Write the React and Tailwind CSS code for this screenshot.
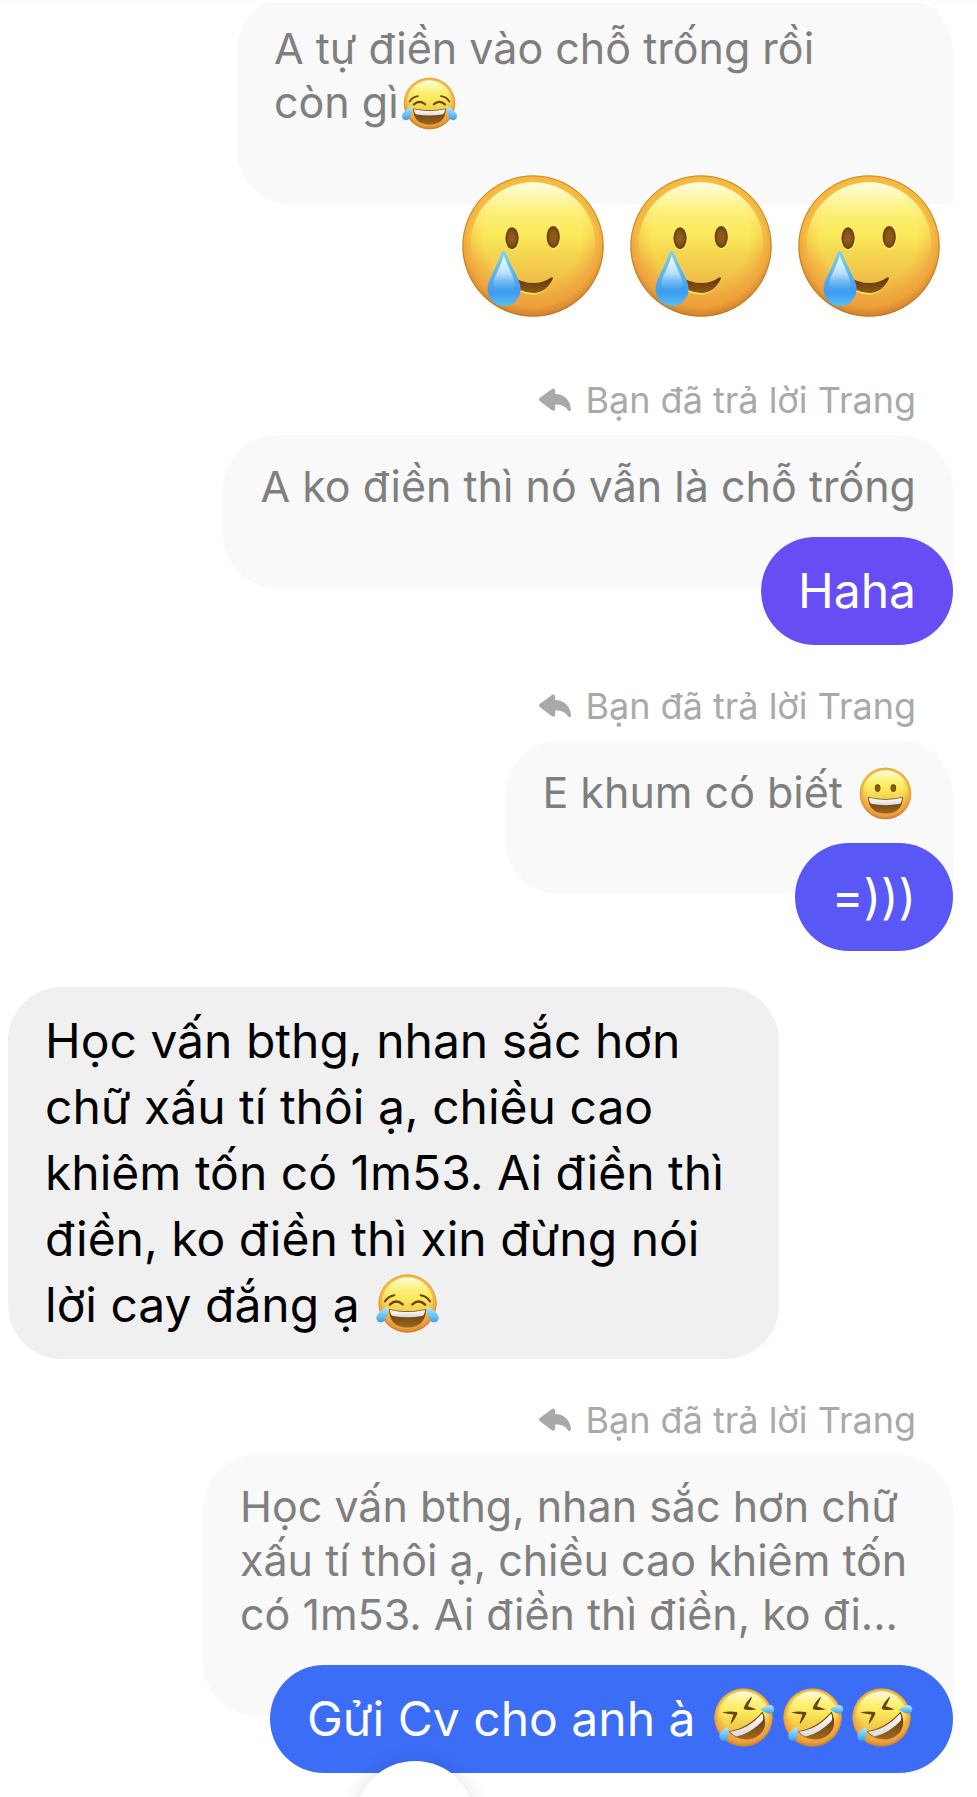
import clsx from 'clsx';

export default function App() {
  return (
    <div className="relative overflow-hidden bg-white pr-6 pb-6 pl-2 font-['Inter','Noto_Sans',sans-serif]">
      <EmojiDefs />
      <div className="absolute inset-x-0 top-0 z-10 h-[3px] bg-[#fdfdfd]" />

      <main className="-mt-[3px] flex flex-col">
        <section className="flex flex-col items-end">
          <Quote className="w-[716px]">
            A tự điền vào chỗ trống rồi
            <br />
            còn gì
            <Emoji name="joy" size="sm" />
          </Quote>
          <div className="-mt-[42px] flex">
            <Emoji name="tear" size="lg" />
            <Emoji name="tear" size="lg" />
            <Emoji name="tear" size="lg" />
          </div>
        </section>

        <section className="mt-[49px] flex flex-col items-end">
          <ReplyLabel />
          <Quote>A ko điền thì nó vẫn là chỗ trống</Quote>
          <Sent className="bg-[#674df4]">Haha</Sent>
        </section>

        <section className="mt-10 flex flex-col items-end">
          <ReplyLabel />
          <Quote>
            E khum có biết <Emoji name="grin" size="sm" />
          </Quote>
          <Sent className="bg-[#5957f5]">=)))</Sent>
        </section>

        <section className="mt-9 flex">
          <p className="w-[771px] rounded-[54px] bg-[#f0f0f0] px-[37px] py-[21px] text-[48px] leading-[66px] text-black">
            Học vấn bthg, nhan sắc hơn
            <br />
            chữ xấu tí thôi ạ, chiều cao
            <br />
            khiêm tốn có 1m53. Ai điền thì
            <br />
            điền, ko điền thì xin đừng nói
            <br />
            lời cay đắng ạ <Emoji name="joy" size="md" />
          </p>
        </section>

        <section className="mt-10 flex flex-col items-end">
          <ReplyLabel />
          <Quote className="w-[750px]">
            Học vấn bthg, nhan sắc hơn chữ
            <br />
            xấu tí thôi ạ, chiều cao khiêm tốn
            <br />
            có 1m53. Ai điền thì điền, ko đi...
          </Quote>
          <Sent className="bg-[#3b6df6]">
            Gửi Cv cho anh à <Emoji name="rofl" size="md" />
            <Emoji name="rofl" size="md" />
            <Emoji name="rofl" size="md" />
          </Sent>
        </section>
      </main>

      {/* scroll-to-bottom button, mostly below the fold */}
      <button
        type="button"
        aria-label="Cuộn xuống"
        className="absolute -bottom-[84px] left-[355px] size-[120px] rounded-full bg-white shadow-[0_0_20px_rgba(0,0,0,0.12)]"
      />
    </div>
  );
}

function ReplyLabel() {
  return (
    <div className="mb-[14px] flex items-center gap-[14px] pr-[37px] text-[36px] leading-[42px] text-[#a9a9a9]">
      <svg viewBox="0 0 32 24" className="h-6 w-8" fill="currentColor" aria-hidden="true">
        <path d="M12.6 1.2C14.2-.2 16.2.4 16.2 2.4V6C24.6 6 31.2 11.6 32 21.2C32.1 23.3 30 23.6 29 22.4C26 18.2 22.2 16.6 16.2 16.6V20.6C16.2 22.8 14.2 23.4 12.6 22L1 13.2C-.3 12.2-.3 10.8 1 9.8Z" />
      </svg>
      <span>Bạn đã trả lời Trang</span>
    </div>
  );
}

function Quote({ className, children }) {
  return (
    <blockquote
      className={clsx(
        'rounded-[54px] rounded-br-none bg-[#f9f9f9] px-[37px] pt-6 pb-[75px] text-[43px] leading-[54px] whitespace-nowrap text-[#7f7f7f]',
        className
      )}
    >
      {children}
    </blockquote>
  );
}

function Sent({ className, children }) {
  return (
    <p
      className={clsx(
        'relative -mt-[51px] rounded-[54px] px-[37px] py-[21px] text-[48px] leading-[66px] whitespace-nowrap text-white',
        className
      )}
    >
      {children}
    </p>
  );
}

const sizes = {
  sm: 'inline align-baseline -my-4 size-[61px]',
  md: 'inline align-baseline -my-4 size-[69px]',
  lg: 'relative size-[168px]',
};

const faces = { joy: Joy, grin: Grin, rofl: Rofl, tear: Tear };

const labels = {
  joy: 'cười ra nước mắt',
  grin: 'cười toe toét',
  rofl: 'cười lăn lộn',
  tear: 'cười rơi lệ',
};

function Emoji({ name, size }) {
  const Face = faces[name];
  return (
    <svg viewBox="0 0 69 69" role="img" aria-label={labels[name]} className={sizes[size]}>
      <circle cx="34.5" cy="34.5" r="29" fill="url(#skin)" />
      <circle cx="34.5" cy="34.5" r="29" fill="url(#rim)" />
      <ellipse cx="34.5" cy="33.5" rx="25.5" ry="25.2" fill="url(#gloss)" />
      <circle cx="34.5" cy="34.5" r="28.8" fill="none" stroke="#a86a22" strokeOpacity=".6" strokeWidth=".4" />
      <Face />
    </svg>
  );
}

function Joy() {
  return (
    <g>
      <g fill="none" stroke="#6b4012" strokeWidth="2.4" strokeLinecap="round">
        <path d="M12 32.4Q15.4 27 21.4 26.2M57 32.4Q53.6 27 47.6 26.2" strokeWidth="2" />
        <path d="M16.8 35.6Q23.2 29.6 29.6 35.4M39.4 35.4Q45.8 29.6 52.2 35.6" />
      </g>
      <path d="M16 40.2Q34.5 44.2 53 40.2Q52.6 58.4 34.5 58.4Q16.4 58.4 16 40.2Z" fill="url(#mouth)" />
      <path d="M17 41Q34.5 45 52 41Q51.8 46.6 48.8 47Q34.5 49.4 20.2 47Q17.2 46.6 17 41Z" fill="url(#teeth)" />
      <path d="M14.8 37.6C10 39.6 2.6 44.8 3.4 49.8C4.2 54.4 10.6 54.6 12.8 50C14.6 46.2 15 41.6 14.8 37.6Z" fill="url(#drop)" />
      <path d="M54.2 37.6C59 39.6 66.4 44.8 65.6 49.8C64.8 54.4 58.4 54.6 56.2 50C54.4 46.2 54 41.6 54.2 37.6Z" fill="url(#drop)" />
    </g>
  );
}

function Grin() {
  return (
    <g>
      <ellipse cx="25.6" cy="28.4" rx="3.2" ry="4.3" fill="url(#eye)" />
      <ellipse cx="43.4" cy="28.4" rx="3.2" ry="4.3" fill="url(#eye)" />
      <path d="M14.8 38.4Q34.5 43 54.2 38.4Q53.6 57.2 34.5 57.2Q15.4 57.2 14.8 38.4Z" fill="url(#mouth)" />
      <path d="M15.8 39.2Q34.5 43.8 53.2 39.2Q53 46 49.6 46.4Q34.5 49 19.4 46.4Q16 46 15.8 39.2Z" fill="url(#teeth)" />
    </g>
  );
}

function Rofl() {
  return (
    <g>
      <g fill="#6b4012">
        <path d="M13 29.4Q20.4 27.6 27.6 29Q28.8 29.6 28.2 31Q25.8 36.8 22.2 40.8Q21.6 40.4 21.8 39.4Q23.2 35 24.6 31.6Q18.8 30.8 13 29.4Z" />
        <path d="M42.6 13.6Q43 14 42.6 15.2Q40.6 20 38.8 23.2Q43.4 24.4 47.8 26.6Q41.6 27.4 35.8 26.4Q34.4 26 34.8 24.6Q37 19 42.6 13.6Z" />
      </g>
      <path d="M19.4 48.4Q39 45.4 53.6 28.6Q60 43.6 50.4 51.8Q41.2 59.4 28.4 54.8Q22.6 52.4 19.4 48.4Z" fill="url(#mouth)" />
      <path d="M20.8 48.8Q39.6 46.4 53.2 30.2Q55 35.4 53.4 38Q42.4 49.8 28 53.4Q24 52.6 20.8 48.8Z" fill="url(#teeth)" />
      <path d="M19.2 44C14.6 45.6 10 49.8 10.4 53.4C10.8 58.6 17.2 59.4 19 54.8C20 51.4 19.8 47.4 19.2 44Z" fill="url(#drop)" />
      <path d="M52 26.4C55.2 23.6 60 21.2 63 22.6C66 24.4 66 28.8 62.8 30.2C59.6 31.4 55.4 29 52 26.4Z" fill="url(#drop)" />
    </g>
  );
}

function Tear() {
  return (
    <g>
      <ellipse cx="26" cy="31.6" rx="2.9" ry="4.7" fill="#fff38a" opacity=".7" />
      <ellipse cx="42.9" cy="31.1" rx="2.9" ry="4.7" fill="#fff38a" opacity=".7" />
      <ellipse cx="25.9" cy="31.3" rx="2.7" ry="4.5" fill="url(#eye)" />
      <ellipse cx="42.8" cy="30.8" rx="2.7" ry="4.5" fill="url(#eye)" />
      <path d="M25 48Q34 54.4 42.8 48Q39.6 54.6 34.6 54.5Q28.6 54.4 25 50Z" fill="#ffdf58" />
      <path d="M25 46.6Q34.6 52.4 41.8 47.5Q42.9 47 42.6 48.2Q39.8 53.9 34.6 53.8Q28.6 53.6 25 49Z" fill="url(#lip)" />
      <path d="M22.5 36.6C23.2 36.6 23.7 38 24.4 39.8C26.4 44.6 29.4 48.4 29.4 52.2C29.4 56.2 26.4 59.2 22.6 59.2C18.8 59.2 15.8 56.2 15.8 52.2C15.8 48.4 18.8 44.6 20.6 39.8C21.3 38 21.8 36.6 22.5 36.6Z" fill="url(#bigdrop)" />
      <path d="M22.5 38.4C24.8 44.6 27.2 47.8 27 50.6C26.6 53.4 18.6 53.4 18.2 50.6C18 47.8 20.6 44.6 22.5 38.4Z" fill="url(#shine)" />
    </g>
  );
}

// gradients shared by every emoji on the page
function EmojiDefs() {
  return (
    <svg className="absolute size-0" aria-hidden="true">
      <defs>
        <linearGradient id="skin" x1="0" y1="0" x2="0" y2="1">
          <stop offset="0" stopColor="#f6c93f" />
          <stop offset=".4" stopColor="#f8e455" />
          <stop offset=".65" stopColor="#f3cb4d" />
          <stop offset="1" stopColor="#eb9c36" />
        </linearGradient>
        <radialGradient id="rim" cx=".5" cy=".44" r=".57">
          <stop offset=".6" stopColor="#f0a23c" stopOpacity="0" />
          <stop offset=".85" stopColor="#ef9f3b" stopOpacity=".8" />
          <stop offset="1" stopColor="#c97a28" />
        </radialGradient>
        <linearGradient id="gloss" x1="0" y1="0" x2="0" y2="1">
          <stop offset="0" stopColor="#fffde4" />
          <stop offset=".22" stopColor="#fff98f" stopOpacity=".8" />
          <stop offset=".45" stopColor="#fdf060" stopOpacity=".4" />
          <stop offset=".65" stopColor="#f7d850" stopOpacity="0" />
        </linearGradient>
        <radialGradient id="eye">
          <stop offset="0" stopColor="#94601c" />
          <stop offset=".65" stopColor="#855217" />
          <stop offset="1" stopColor="#5f3709" />
        </radialGradient>
        <linearGradient id="mouth" x1="0" y1="0" x2="0" y2="1">
          <stop offset="0" stopColor="#5c370c" />
          <stop offset="1" stopColor="#9c6721" />
        </linearGradient>
        <linearGradient id="lip" x1="0" y1="0" x2="0" y2="1">
          <stop offset="0" stopColor="#5a3108" />
          <stop offset="1" stopColor="#8f581a" />
        </linearGradient>
        <linearGradient id="teeth" x1="0" y1="0" x2="0" y2="1">
          <stop offset="0" stopColor="#ffffff" />
          <stop offset="1" stopColor="#dcdad8" />
        </linearGradient>
        <linearGradient id="drop" x1="0" y1="0" x2="0" y2="1">
          <stop offset="0" stopColor="#b9e8fd" />
          <stop offset=".5" stopColor="#74c8f8" />
          <stop offset="1" stopColor="#3c9fea" />
        </linearGradient>
        <linearGradient id="bigdrop" x1="0" y1="0" x2="0" y2="1">
          <stop offset="0" stopColor="#7fd3f2" />
          <stop offset=".4" stopColor="#5db4ee" />
          <stop offset=".75" stopColor="#3f9bf0" />
          <stop offset="1" stopColor="#58c0f2" />
        </linearGradient>
        <linearGradient id="shine" x1="0" y1="0" x2="0" y2="1">
          <stop offset="0" stopColor="#f2fdff" />
          <stop offset=".5" stopColor="#cdeafd" stopOpacity=".85" />
          <stop offset="1" stopColor="#7cbdf6" stopOpacity="0" />
        </linearGradient>
      </defs>
    </svg>
  );
}
